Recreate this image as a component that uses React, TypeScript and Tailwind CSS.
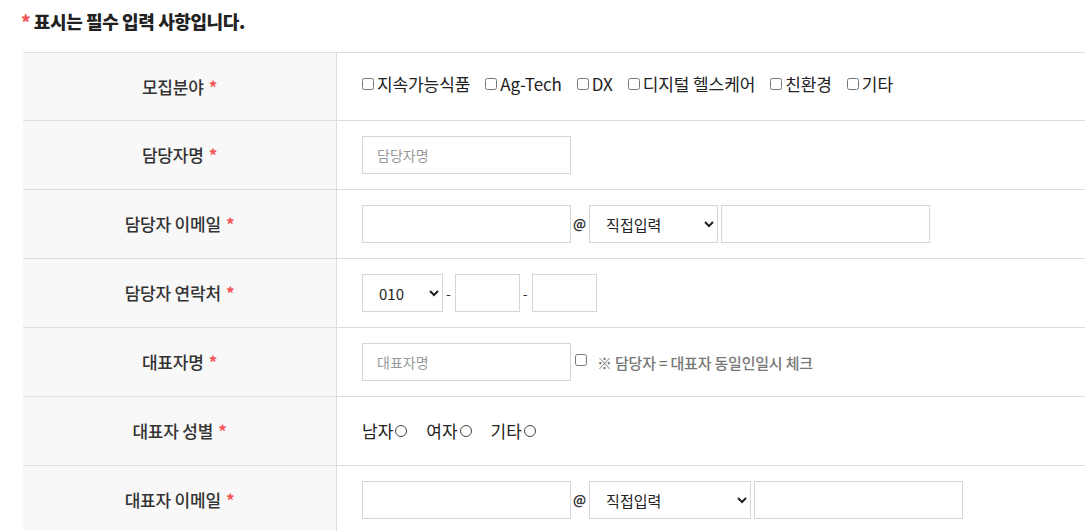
import React from 'react';

const font = "font-['Noto_Sans_CJK_KR','Noto_Sans',sans-serif]";

const Req = () => <span className="ml-[5px] text-[#f55454] font-bold">*</span>;

const Row = ({ label, children, first }: { label: string; children: React.ReactNode; first?: boolean }) => (
  <div className={`flex border-b border-[#dddddd] ${first ? 'h-[68px]' : 'h-[69px]'}`}>
    <div className="w-[314px] shrink-0 bg-[#f8f8f8] border-r border-[#dddddd] flex items-center justify-center text-[17px] text-[#333] font-medium tracking-[-0.2px]">
      {label}
      <Req />
    </div>
    <div className="flex-1 flex items-center pl-[25px]">{children}</div>
  </div>
);

const TextInput = ({ w = 'w-[209px]', placeholder }: { w?: string; placeholder?: string }) => (
  <input
    type="text"
    placeholder={placeholder}
    className={`${w} h-[38px] border border-[#d6d6d6] bg-white px-[14px] text-[14px] text-[#333] placeholder:text-[#999] outline-none`}
  />
);

const Select = ({ w, value }: { w: string; value: string }) => (
  <select
    defaultValue={value}
    className={`${w} h-[38px] border border-[#d6d6d6] bg-white pl-[12px] pr-[4px] text-[15px] text-[#222] outline-none`}
  >
    <option>{value}</option>
  </select>
);

const EmailField = ({ selectW }: { selectW: string }) => (
  <div className="flex items-center">
    <TextInput />
    <span className="ml-[2px] mr-[3px] text-[13px] text-[#333] font-bold">@</span>
    <Select w={selectW} value="직접입력" />
    <div className="ml-[3px]">
      <TextInput />
    </div>
  </div>
);

const Check = ({ label }: { label: string }) => (
  <label className="flex items-center mr-[15px] text-[17px] text-[#222] tracking-[-0.1px]">
    <input type="checkbox" className="w-[12px] h-[12px] m-0 mr-[3px]" />
    {label}
  </label>
);

export default function App() {
  return (
    <div className={`${font} w-[1085px] h-[531px] overflow-hidden bg-white`}>
      <div className="pl-[21px] pt-[8px] h-[52px] text-[18px] font-black text-[#222] tracking-[-0.4px]">
        <span className="text-[#f55454]">*</span> 표시는 필수 입력 사항입니다.
      </div>
      <div className="ml-[23px] border-t border-[#dddddd]">
        <Row label="모집분야" first>
          <div className="flex items-center -mt-[6px]">
            <Check label="지속가능식품" />
            <Check label="Ag-Tech" />
            <Check label="DX" />
            <Check label="디지털 헬스케어" />
            <Check label="친환경" />
            <Check label="기타" />
          </div>
        </Row>
        <Row label="담당자명">
          <TextInput placeholder="담당자명" />
        </Row>
        <Row label="담당자 이메일">
          <EmailField selectW="w-[129px]" />
        </Row>
        <Row label="담당자 연락처">
          <div className="flex items-center">
            <Select w="w-[81px]" value="010" />
            <span className="ml-[3px] mr-[4px] text-[14px] text-[#333]">-</span>
            <TextInput w="w-[65px]" />
            <span className="ml-[3px] mr-[4px] text-[14px] text-[#333]">-</span>
            <TextInput w="w-[65px]" />
          </div>
        </Row>
        <Row label="대표자명">
          <div className="flex items-center">
            <TextInput placeholder="대표자명" />
            <input type="checkbox" className="w-[12px] h-[12px] m-0 ml-[4px] -mt-[4px]" />
            <span className="ml-[10px] mt-[2px] text-[15px] font-medium text-[#777] tracking-[-0.2px]">※ 담당자 = 대표자 동일인일시 체크</span>
          </div>
        </Row>
        <Row label="대표자 성별">
          <div className="flex items-center text-[17px] text-[#222]">
            {['남자', '여자', '기타'].map((g) => (
              <label key={g} className="flex items-center mr-[19px]">
                {g}
                <input
                  type="radio"
                  name="gender"
                  className="appearance-none w-[12px] h-[12px] m-0 ml-[2px] rounded-full border border-[#444] bg-white"
                />
              </label>
            ))}
          </div>
        </Row>
        <Row label="대표자 이메일">
          <EmailField selectW="w-[162px]" />
        </Row>
      </div>
    </div>
  );
}
